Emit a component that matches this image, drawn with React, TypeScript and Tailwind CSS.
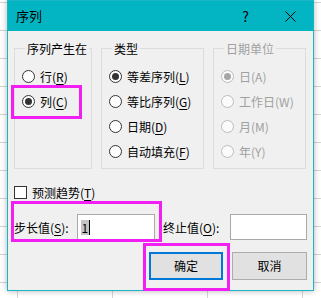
import React from 'react';

const font = "font-['Microsoft_YaHei','Noto_Sans_CJK_SC',sans-serif]";

function Radio({ label, mnemonic, suffix = ')', checked = false, disabled = false }: {
    label: string; mnemonic: string; suffix?: string; checked?: boolean; disabled?: boolean;
}) {
    return (
        <div className="h-[25px] flex items-center gap-[5px]">
            <span className={`w-[13px] h-[13px] rounded-full border flex items-center justify-center ${disabled ? 'border-[#bcbcbc] bg-[#fbfbfb]' : 'border-[#333333] bg-white'}`}>
                {checked && <span className={`w-[7px] h-[7px] rounded-full ${disabled ? 'bg-[#a6a6a6]' : 'bg-[#333333]'}`} />}
            </span>
            <span className={`text-[12px] leading-[15px] whitespace-nowrap ${disabled ? 'text-[#a0a0a0]' : 'text-black'}`}>
                {label}(<span className={disabled ? '' : 'underline underline-offset-2'}>{mnemonic}</span>{suffix}
            </span>
        </div>
    );
}

function Group({ title, width, disabled = false, children }: {
    title: string; width: string; disabled?: boolean; children: React.ReactNode;
}) {
    return (
        <fieldset className={`${width} h-[128px] border border-[#dcdcdc] pl-[7px]`}>
            <legend className={`ml-[3px] px-[2px] text-[12px] leading-[15px] ${disabled ? 'text-[#a0a0a0]' : 'text-black'}`}>{title}</legend>
            <div className="mt-[8px] flex flex-col">{children}</div>
        </fieldset>
    );
}

export default function App() {
    return (
        <div className={`relative w-[321px] h-[298px] overflow-hidden bg-white ${font}`}>
            {/* spreadsheet grid behind the dialog */}
            <div className="absolute inset-0 [background-image:linear-gradient(to_right,#d4d4d4_1px,transparent_1px),linear-gradient(to_bottom,#d4d4d4_1px,transparent_1px)] [background-size:95px_28px] [background-position:17px_2px]" />

            <div className="absolute left-[7px] top-0 w-[307px] h-[291px] border border-[#19b5c4] bg-[#f0f0f0] shadow-[0_0_6px_rgba(0,0,0,0.3)] flex flex-col">
                <div className="h-[30px] bg-[#03b5c2] flex items-center pl-[8px] pr-[17px]">
                    <span className="text-[13px] text-black">序列</span>
                    <span className="ml-auto mr-[36px] text-[14px] text-black">?</span>
                    <svg width="11" height="11" viewBox="0 0 11 11">
                        <path d="M0.5 0.5 L10.5 10.5 M10.5 0.5 L0.5 10.5" stroke="#000" strokeWidth="1" />
                    </svg>
                </div>

                <div className="px-[6px] pt-[10px] flex flex-col">
                    <div className="flex gap-[9px]">
                        <Group title="序列产生在" width="w-[78px]">
                            <Radio label="行" mnemonic="R" />
                            <Radio label="列" mnemonic="C" checked />
                        </Group>
                        <Group title="类型" width="w-[103px]">
                            <Radio label="等差序列" mnemonic="L" checked />
                            <Radio label="等比序列" mnemonic="G" />
                            <Radio label="日期" mnemonic="D" />
                            <Radio label="自动填充" mnemonic="F" />
                        </Group>
                        <Group title="日期单位" width="w-[93px]" disabled>
                            <Radio label="日" mnemonic="A" checked disabled />
                            <Radio label="工作日" mnemonic="W" disabled />
                            <Radio label="月" mnemonic="M" disabled />
                            <Radio label="年" mnemonic="Y" disabled />
                        </Group>
                    </div>

                    <div className="mt-[13px] h-[20px] flex items-center gap-[5px]">
                        <span className="w-[13px] h-[13px] border border-[#333333] bg-white" />
                        <span className="text-[12px] leading-[15px] text-black">
                            预测趋势(<span className="underline underline-offset-2">T</span>)
                        </span>
                    </div>

                    <div className="mt-[12px] flex items-center">
                        <span className="w-[63px] text-[12px] leading-[15px] text-black whitespace-nowrap">
                            步长值(<span className="underline underline-offset-2">S</span>):
                        </span>
                        <div className="w-[79px] h-[26px] border border-[#a9a9a9] bg-white flex items-center pl-[3px]">
                            <span className="bg-[#c4c4c4] px-[1px] text-[12px] leading-[15px] text-black border-r border-black">1</span>
                        </div>
                        <span className="w-[75px] pl-[8px] text-[12px] leading-[15px] text-black whitespace-nowrap">
                            终止值(<span className="underline underline-offset-2">O</span>):
                        </span>
                        <div className="w-[78px] h-[26px] border border-[#a9a9a9] bg-white" />
                    </div>

                    <div className="mt-[12px] flex justify-end gap-[9px]">
                        <button className="w-[74px] h-[28px] border-2 border-[#0078d7] bg-[#e1e1e1] text-[12px] text-black">确定</button>
                        <button className="w-[75px] h-[28px] border border-[#adadad] bg-[#e1e1e1] text-[12px] text-black">取消</button>
                    </div>
                </div>
            </div>

            {/* magenta annotation frames */}
            <div className="absolute left-[11px] top-[85px] w-[71px] h-[34px] border-[3px] border-[#f21ff2]" />
            <div className="absolute left-[11px] top-[201px] w-[151px] h-[41px] border-[3px] border-[#f21ff2]" />
            <div className="absolute left-[143px] top-[243px] w-[87px] h-[48px] border-[3px] border-[#f21ff2]" />
        </div>
    );
}
